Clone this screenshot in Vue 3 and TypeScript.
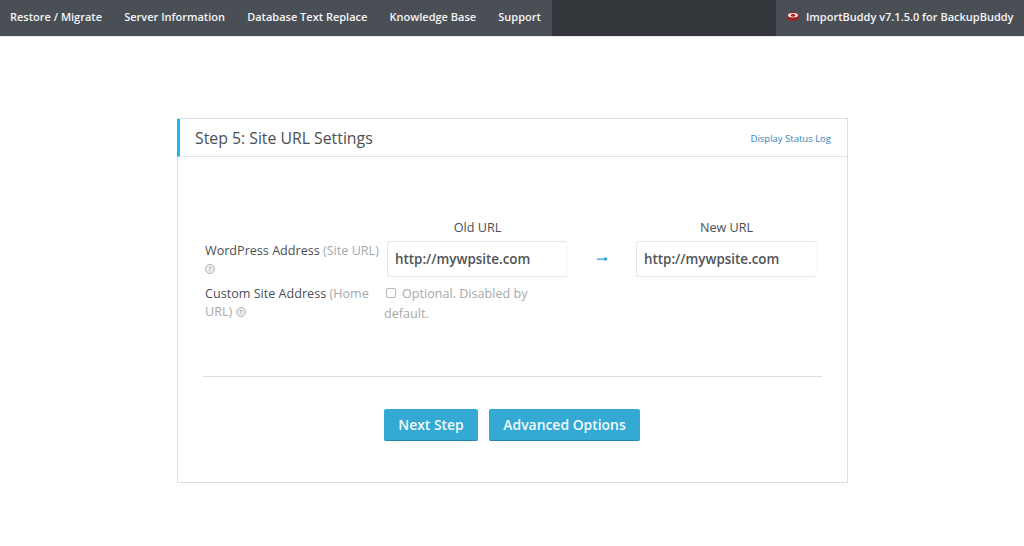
<script setup lang="ts">
const navItems: string[] = ['Restore / Migrate', 'Server Information', 'Database Text Replace', 'Knowledge Base', 'Support']
</script>

<template>
  <div class="page">
    <header class="topbar">
      <nav class="nav-left">
        <a v-for="item in navItems" :key="item" class="nav-item">{{ item }}</a>
      </nav>
      <div class="nav-brand">
        <svg class="brand-icon" width="12" height="9" viewBox="0 0 12 9">
          <ellipse cx="6" cy="4.5" rx="6" ry="4.5" fill="#a3201f" />
          <ellipse cx="6" cy="3.2" rx="5" ry="2.2" fill="#efecec" />
          <ellipse cx="6" cy="3.2" rx="2.2" ry="1.5" fill="#c2221f" />
        </svg>
        <span>ImportBuddy v7.1.5.0 for BackupBuddy</span>
      </div>
    </header>

    <main class="card">
      <div class="card-head">
        <h1>Step 5: Site URL Settings</h1>
        <a class="status-link">Display Status Log</a>
      </div>
      <div class="card-body">
        <div class="form-grid">
          <div class="col-head old-head">Old URL</div>
          <div class="col-head new-head">New URL</div>

          <div class="row-label first">
            WordPress Address <span class="muted">(Site URL)</span> <span class="help">?</span>
          </div>
          <div class="url-box">http://mywpsite.com</div>
          <div class="arrow">
            <svg width="11" height="8" viewBox="0 0 11 8"><path d="M0 3.4 H7.5 V1.8 L11 4 L7.5 6.2 V4.7 H0 Z" fill="#2f9fd8" /></svg>
          </div>
          <div class="url-box">http://mywpsite.com</div>

          <div class="row-label second">
            Custom Site Address <span class="muted">(Home</span> <span class="muted">URL)</span> <span class="help">?</span>
          </div>
          <div class="optional">
            <span class="check"></span><span>Optional. Disabled by</span> <span>default.</span>
          </div>
        </div>

        <hr class="divider" />

        <div class="actions">
          <button class="btn btn-next" type="button">Next Step</button>
          <button class="btn btn-adv" type="button">Advanced Options</button>
        </div>
      </div>
    </main>
  </div>
</template>

<style>
html, body { margin: 0; background: #fff; }
</style>

<style scoped>
.page {
  width: 1024px;
  height: 546px;
  overflow: hidden;
  background: #fff;
  font-family: "Open Sans", "Liberation Sans", sans-serif;
  color: #4a4f55;
}
.topbar {
  height: 36px;
  background: #33363a;
  display: flex;
  justify-content: space-between;
  border-bottom: 1px solid #e4e4e4;
}
.nav-left {
  width: 552px;
  background: #4a4f56;
  display: flex;
  align-items: center;
  gap: 22.2px;
  padding: 0 0 4px 10px;
  box-sizing: border-box;
}
.nav-item {
  color: #f4f5f6;
  font-size: 11px;
  font-weight: 600;
  white-space: nowrap;
}
.nav-brand {
  width: 248px;
  background: #4a4f56;
  display: flex;
  align-items: center;
  gap: 7px;
  padding: 0 0 4px 11px;
  box-sizing: border-box;
  color: #f4f5f6;
  font-size: 11px;
  font-weight: 600;
  white-space: nowrap;
}
.brand-icon { flex: none; }
.card {
  width: 671px;
  height: 365px;
  margin: 81px 0 0 177px;
  box-sizing: border-box;
  border: 1px solid #dcdfe1;
  background: #fff;
}
.card-head {
  height: 38px;
  box-sizing: border-box;
  margin-left: -1px;
  border-left: 3px solid #1db8ee;
  border-bottom: 1px solid #e2e4e6;
  display: flex;
  align-items: center;
  justify-content: space-between;
  padding: 0 16px 0 15px;
}
.card-head h1 {
  margin: 0;
  font-size: 15.8px;
  font-weight: 400;
  color: #4b4f54;
}
.status-link {
  font-size: 9.5px;
  color: #2e86c1;
  padding-top: 1px;
}
.card-body {
  padding: 62px 26px 0 25px;
}
.form-grid {
  display: grid;
  grid-template-columns: 184px 181px 68px 181px;
  font-size: 12.6px;
  line-height: 18px;
}
.col-head {
  text-align: center;
  height: 22px;
  color: #4a4f55;
}
.old-head { grid-column: 2; }
.new-head { grid-column: 4; }
.row-label {
  padding: 1px 0 0 2px;
  color: #4a4f55;
}
.row-label.first {
  height: 36px;
  box-sizing: border-box;
}
.row-label.second { padding-top: 8px; height: 45px; box-sizing: border-box; }
.muted { color: #a6a9ac; }
.help {
  display: inline-block;
  box-sizing: border-box;
  width: 10px;
  height: 10px;
  border: 1px solid #b4b6b9;
  border-radius: 50%;
  background: #ececed;
  font-size: 6px;
  line-height: 8px;
  text-align: center;
  color: #7f8286;
  vertical-align: 2px;
}
.url-box {
  height: 36px;
  box-sizing: border-box;
  border: 1px solid #e6e7e8;
  border-right-color: #f8f8f8;
  border-radius: 3px;
  padding-left: 7px;
  display: flex;
  align-items: center;
  font-size: 13.4px;
  font-weight: 600;
  color: #4f5358;
  background: #fff;
}
.arrow {
  display: flex;
  align-items: center;
  justify-content: center;
}
.optional {
  grid-column: 2 / 4;
  width: 160px;
  margin-left: -3px;
  padding-top: 7px;
  line-height: 20px;
  color: #a6a9ac;
}
.check {
  display: inline-block;
  width: 8px;
  height: 8px;
  border: 1px solid #b5b7ba;
  border-radius: 2px;
  margin: 0 6px 0 2px;
}
.divider {
  border: 0;
  border-top: 1px solid #dcdfe1;
  margin: 52px 0 0;
  width: 619px;
}
.actions {
  display: flex;
  gap: 11px;
  margin: 32px 0 0 181px;
}
.btn {
  height: 32px;
  border: 0;
  border-bottom: 1px solid #2388ac;
  border-radius: 2px;
  background: #33a9d3;
  color: #f4fafd;
  font-family: inherit;
  font-size: 13.9px;
  font-weight: 600;
  padding: 0 0 1px;
}
.btn-next { width: 94px; }
.btn-adv { width: 151px; }
</style>
